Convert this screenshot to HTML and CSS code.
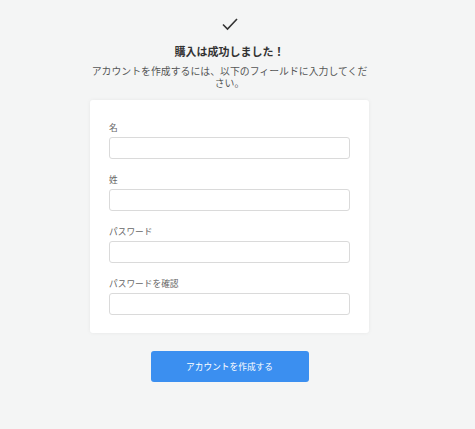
FILE: index.html
```html
<!DOCTYPE html>
<html lang="ja">
<head>
<meta charset="utf-8">
<link rel="stylesheet" href="styles.css">
</head>
<body>
<main class="page">
  <div class="check">
    <svg width="16" height="14" viewBox="0 0 16 14"><path d="M1 7.5 L5.5 12 L15 2" fill="none" stroke="#333" stroke-width="1.6"/></svg>
  </div>
  <h1 class="title">購入は成功しました！</h1>
  <p class="subtitle">アカウントを作成するには、以下のフィールドに入力してください。</p>
  <form class="card">
    <label class="field"><span class="label">名</span><input class="input" type="text"></label>
    <label class="field"><span class="label">姓</span><input class="input" type="text"></label>
    <label class="field"><span class="label">パスワード</span><input class="input" type="password"></label>
    <label class="field"><span class="label">パスワードを確認</span><input class="input" type="password"></label>
  </form>
  <button class="btn" type="button">アカウントを作成する</button>
</main>
</body>
</html>
```

FILE: styles.css
```css
html, body {
  margin: 0;
  padding: 0;
  background: #f4f5f5;
}
body {
  font-family: "Noto Sans CJK JP", "Noto Sans", sans-serif;
  color: #333;
}
.page {
  width: 459px;
  display: flex;
  flex-direction: column;
  align-items: center;
  padding-top: 17px;
}
.check {
  height: 14px;
  display: flex;
}
.title {
  margin: 13px 0 0;
  font-size: 11px;
  line-height: 14px;
  font-weight: 700;
  color: #333;
}
.subtitle {
  margin: 7px 0 0;
  width: 282px;
  font-size: 9.9px;
  line-height: 12px;
  text-align: center;
  color: #555;
}
.card {
  margin-top: 11px;
  width: 279px;
  box-sizing: border-box;
  background: #fff;
  border-radius: 3px;
  box-shadow: 0 0 4px rgba(0,0,0,0.06);
  padding: 22px 19px 18px;
  display: flex;
  flex-direction: column;
  gap: 15px;
}
.field {
  display: flex;
  flex-direction: column;
  gap: 4px;
}
.label {
  font-size: 8.7px;
  line-height: 11px;
  color: #666;
}
.input {
  height: 22px;
  box-sizing: border-box;
  border: 1px solid #dadada;
  border-radius: 3px;
  background: #fff;
  margin: 0;
  padding: 0 6px;
}
.btn {
  margin-top: 18px;
  width: 158px;
  height: 31px;
  border: none;
  border-radius: 3px;
  background: #3b8ff0;
  color: #fff;
  font-family: "Noto Sans CJK JP", "Noto Sans", sans-serif;
  font-size: 8.7px;
}
```
